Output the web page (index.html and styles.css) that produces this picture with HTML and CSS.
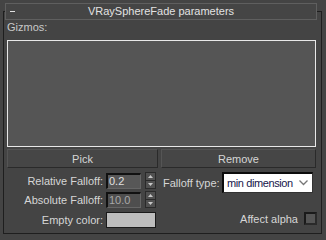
FILE: index.html
```html
<!DOCTYPE html>
<html>
<head>
<meta charset="utf-8">
<link rel="stylesheet" href="styles.css">
</head>
<body>
<div class="frame">
  <div class="title"><span class="minus"></span><span class="title-text">VRaySphereFade parameters</span></div>
  <div class="label-gizmos">Gizmos:</div>
  <div class="list"></div>
  <div class="buttons">
    <div class="btn pick">Pick</div>
    <div class="btn remove">Remove</div>
  </div>
  <div class="lower">
    <div class="left">
      <div class="row">
        <span class="lbl">Relative Falloff:</span>
        <span class="input">0.2</span>
        <span class="spin">
          <svg width="11" height="17" viewBox="0 0 11 17"><rect x="0.5" y="0.5" width="10" height="16" fill="#505050" stroke="#2a2a2a"/><line x1="1" y1="8.5" x2="10" y2="8.5" stroke="#2a2a2a"/><path d="M3 6h5L5.5 3z" fill="#c8c8c8"/><path d="M3 11h5L5.5 14z" fill="#c8c8c8"/></svg>
        </span>
      </div>
      <div class="row">
        <span class="lbl">Absolute Falloff:</span>
        <span class="input dim">10.0</span>
        <span class="spin">
          <svg width="11" height="17" viewBox="0 0 11 17"><rect x="0.5" y="0.5" width="10" height="16" fill="#505050" stroke="#2a2a2a"/><line x1="1" y1="8.5" x2="10" y2="8.5" stroke="#2a2a2a"/><path d="M3 6h5L5.5 3z" fill="#c8c8c8"/><path d="M3 11h5L5.5 14z" fill="#c8c8c8"/></svg>
        </span>
      </div>
      <div class="row">
        <span class="lbl">Empty color:</span>
        <span class="swatch"></span>
      </div>
    </div>
    <div class="right">
      <div class="row-r">
        <span class="lbl-r">Falloff type:</span>
        <span class="select"><span class="sel-text">min dimension</span>
          <svg class="chev" width="9" height="6" viewBox="0 0 9 6"><path d="M0.5 0.5L4.5 4.5L8.5 0.5" fill="none" stroke="#777" stroke-width="1.3"/></svg>
        </span>
      </div>
      <div class="row-alpha">
        <span class="lbl-alpha">Affect alpha</span>
        <span class="check"></span>
      </div>
    </div>
  </div>
</div>
</body>
</html>
```

FILE: styles.css
```css
html, body {
  margin: 0;
  padding: 0;
  background: #444444;
  width: 326px;
  height: 240px;
  overflow: hidden;
}
body {
  font-family: "Liberation Sans", Arial, sans-serif;
  font-size: 11px;
  color: #d6d6d6;
}
.frame {
  margin: 11px 0 0 3px;
  width: 319px;
  height: 223px;
  box-sizing: border-box;
  border: 1px solid #1e1e1e;
}
.title {
  margin: -9px 0 0 1px;
  width: 312px;
  height: 17px;
  box-sizing: border-box;
  border: 1px solid #5f5f5f;
  background: #454545;
  display: flex;
  align-items: center;
  color: #e2e2e2;
  line-height: 15px;
}
.minus {
  width: 5px;
  height: 1px;
  margin-left: 4px;
  background: #e0e0e0;
}
.title-text {
  flex: 1;
  text-align: center;
  margin-right: 9px;
}
.label-gizmos {
  height: 14px;
  line-height: 14px;
  margin-left: 3px;
  color: #c9c9c9;
}
.list {
  margin: 6px 0 0 3px;
  width: 309px;
  height: 107px;
  box-sizing: border-box;
  border: 1px solid #e8e8e8;
  background: #555555;
}
.buttons {
  display: flex;
  margin: 2px 0 0 3px;
  gap: 3px;
}
.btn {
  height: 19px;
  box-sizing: border-box;
  border: 1px solid #2a2a2a;
  border-top-color: #555;
  border-left-color: #555;
  background: #464646;
  display: flex;
  align-items: center;
  justify-content: center;
  color: #d6d6d6;
}
.pick { width: 151px; }
.remove { width: 155px; }
.lower {
  display: flex;
  margin-left: 3px;
}
.left {
  width: 154px;
  padding-top: 4px;
  display: flex;
  flex-direction: column;
  gap: 2px;
}
.row {
  display: flex;
  align-items: center;
  height: 17px;
}
.row:last-child { margin-top: 1px; }
.lbl {
  width: 96px;
  text-align: right;
  margin-right: 3px;
  white-space: nowrap;
}
.input {
  width: 35px;
  height: 16px;
  box-sizing: border-box;
  border-top: 2px solid #111;
  border-left: 2px solid #111;
  border-right: 1px solid #666;
  border-bottom: 1px solid #666;
  background: #575757;
  color: #e0e0e0;
  line-height: 13px;
  padding-left: 1px;
  font-size: 11px;
}
.input.dim {
  color: #a8a8a8;
  background: #4e4e4e;
}
.spin {
  margin-left: 4px;
  display: flex;
}
.swatch {
  width: 50px;
  height: 16px;
  box-sizing: border-box;
  border: 1px solid #1a1a1a;
  background: #bdbdbd;
}
.right {
  width: 155px;
  padding-top: 4px;
}
.row-r {
  display: flex;
  align-items: center;
  height: 21px;
  padding-left: 2px;
}
.lbl-r {
  width: 59px;
  white-space: nowrap;
}
.select {
  width: 91px;
  height: 21px;
  box-sizing: border-box;
  border-top: 2px solid #0c0c0c;
  border-left: 2px solid #0c0c0c;
  border-right: 1px solid #333;
  border-bottom: 1px solid #333;
  background: #ffffff;
  display: flex;
  align-items: center;
  color: #15154a;
  padding-left: 3px;
}
.sel-text {
  flex: 1;
  white-space: nowrap;
  letter-spacing: -0.4px;
}
.chev {
  margin-right: 4px;
}
.row-alpha {
  margin-top: 19px;
  display: flex;
  justify-content: flex-end;
  align-items: center;
  height: 13px;
  margin-right: -1px;
}
.lbl-alpha {
  margin-right: 6px;
}
.check {
  width: 13px;
  height: 13px;
  box-sizing: border-box;
  border: 2px solid #1a1a1a;
  border-right-color: #2a2a2a;
  border-bottom-color: #2a2a2a;
  background: #555555;
}
```
